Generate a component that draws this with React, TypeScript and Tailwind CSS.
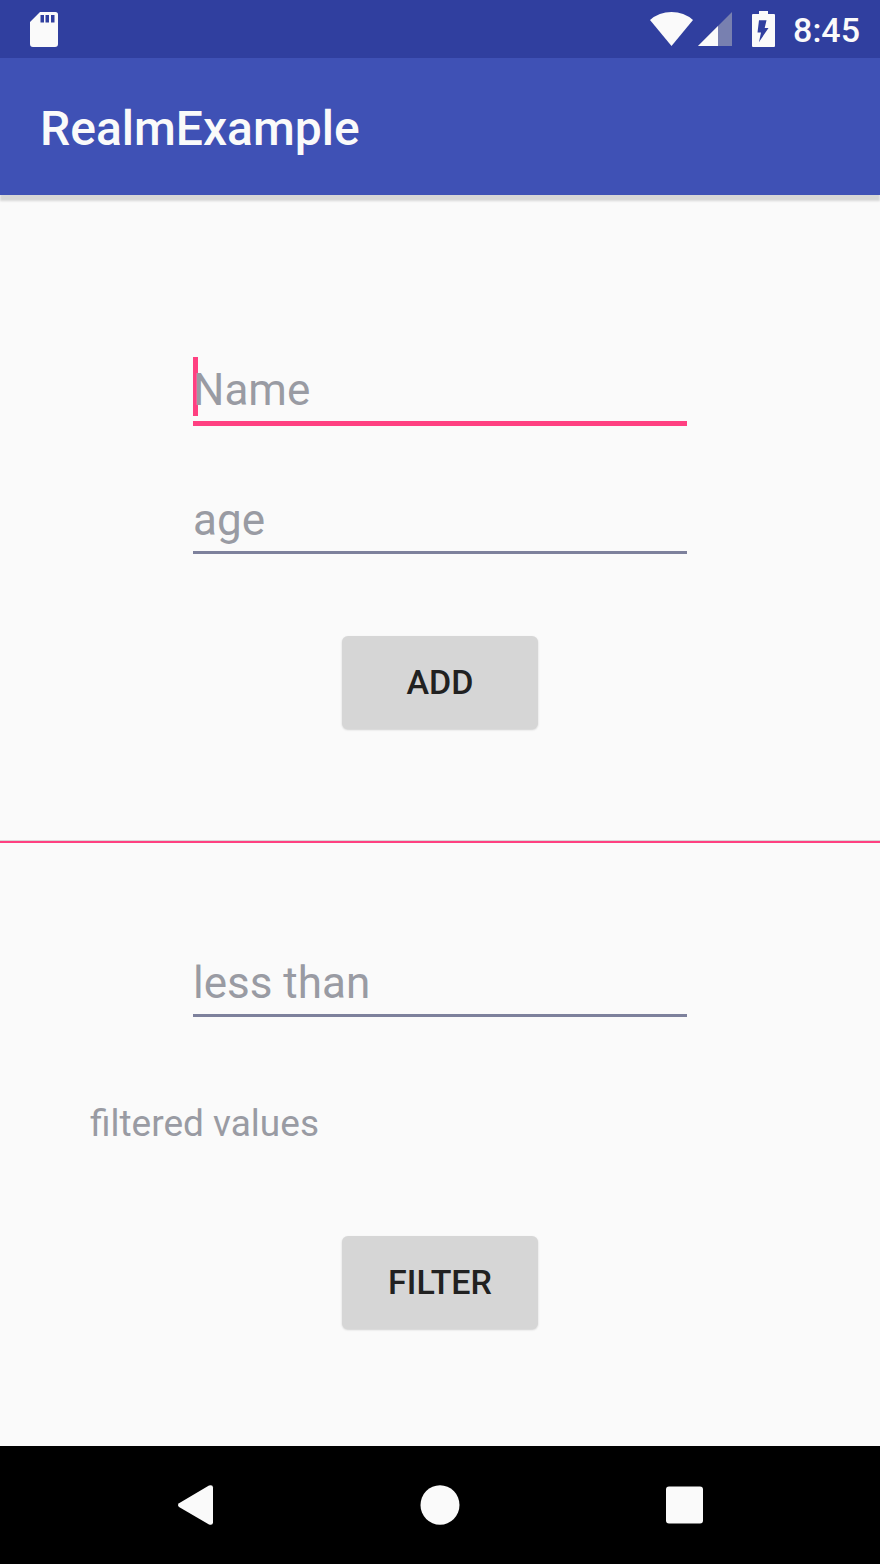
import { useState } from "react";

type FieldProps = {
  id: string;
  label: string;
  focused?: boolean;
  numeric?: boolean;
};

function Field({ id, label, focused = false, numeric = false }: FieldProps) {
  const [value, setValue] = useState("");
  return (
    <div className="relative h-[70px] w-[494px] max-w-full">
      {focused && <span className="absolute top-px left-0 h-[59px] w-[5px] bg-[#ff4081]" />}
      <input
        id={id}
        aria-label={label}
        type="text"
        inputMode={numeric ? "numeric" : "text"}
        placeholder={label}
        value={value}
        onChange={(event) => setValue(event.target.value)}
        className="relative block h-[65px] w-full bg-transparent pt-[2px] text-[44px] leading-[62px] text-[#212121] caret-[#ff4081] outline-none placeholder:text-[#999ba3]"
      />
      <div className={focused ? "h-[5px] bg-[#ff4081]" : "h-[3px] bg-[#7d819c]"} />
    </div>
  );
}

function RaisedButton({ children }: { children: string }) {
  return (
    <button
      type="button"
      className="h-[93px] w-[196px] rounded-[6px] bg-[#d6d6d6] pb-[2px] text-[34px] leading-[40px] font-medium text-[#212121] shadow-[0_1px_2px_#d0d0d0]"
    >
      {children}
    </button>
  );
}

function StatusBar() {
  return (
    <div className="flex h-[58px] items-center bg-[#303f9f] pr-5 pl-[30px] text-[#fafafa]">
      <svg viewBox="0 0 28 35" className="h-[35px] w-7" fill="currentColor" aria-hidden="true">
        <path
          fillRule="evenodd"
          d="M10 0H25.500Q28 0 28 2.500V32Q28 35 25 35H3Q0 35 0 32V10ZM10.500 3V10.500H14V3ZM15.500 3V10.500H19V3ZM21 3V10.500H24.500V3Z"
        />
      </svg>
      <div className="ml-auto flex items-center">
        <svg viewBox="0 0 44 35" className="h-[35px] w-11" fill="currentColor" aria-hidden="true">
          <path d="M21.500 34L0 8Q9 0 21.500 0T43 8Z" />
        </svg>
        <svg viewBox="0 0 34 34" className="ml-1 h-[34px] w-[34px]" aria-hidden="true">
          <path d="M0 34L34 0V34Z" fill="#7880b0" />
          <path d="M0 34L20 14V34Z" fill="#fafafa" />
        </svg>
        <svg viewBox="0 0 23 36" className="ml-5 h-9 w-[23px]" fill="currentColor" aria-hidden="true">
          <path
            fillRule="evenodd"
            d="M7 0H16V3H22Q23 3 23 4V35Q23 36 22 36H1Q0 36 0 35V4Q0 3 1 3H7ZM7 9.300L5.500 21.500H9L7 31L16.500 17H12.700L14.500 9.300Z"
          />
        </svg>
        <span className="ml-[18px] pt-[2px] text-[34px] leading-[40px] font-medium">8:45</span>
      </div>
    </div>
  );
}

function NavigationBar() {
  return (
    <nav className="flex h-[118px] items-center justify-center gap-[205px] bg-black text-[#fafafa]">
      <button type="button" aria-label="Back">
        <svg viewBox="0 0 40 40" className="h-10 w-10" fill="currentColor" aria-hidden="true">
          <path d="M4 18.200L34 .5Q38 -.5 38 2.500V37.500Q38 40.500 34 39.500L4 22Q2 20 4 18.200Z" />
        </svg>
      </button>
      <button type="button" aria-label="Home">
        <svg viewBox="0 0 40 40" className="h-10 w-10" fill="currentColor" aria-hidden="true">
          <ellipse cx="20" cy="20" rx="19.500" ry="19.800" />
        </svg>
      </button>
      <button type="button" aria-label="Overview">
        <svg viewBox="0 0 40 40" className="h-10 w-10" fill="currentColor" aria-hidden="true">
          <rect x="1" y="1.500" width="37" height="37" rx="3" />
        </svg>
      </button>
    </nav>
  );
}

export default function App() {
  return (
    <div className="flex min-h-screen flex-col bg-[#fafafa] font-[Roboto,sans-serif]">
      <StatusBar />
      <header className="flex h-[137px] items-center bg-[#3f51b5] px-10 pt-1 shadow-[0_6px_2px_#d6d6d6]">
        <h1 className="text-[48px] leading-[58px] font-medium text-[#fafafa]">RealmExample</h1>
      </header>
      <main className="flex-1">
        <section className="flex flex-col items-center pt-[161px] pb-[111px]">
          <Field id="name" label="Name" focused />
          <div className="mt-[60px] mb-20 flex w-full justify-center">
            <Field id="age" label="age" numeric />
          </div>
          <RaisedButton>ADD</RaisedButton>
        </section>
        <hr className="h-[3px] border-0 border-t border-[#d6d6d6] bg-[#ff4081]" />
        <section className="flex flex-col items-center pt-[106px] pb-[115px]">
          <Field id="less-than" label="less than" numeric />
          <p className="mt-[81px] mb-[88px] w-full px-[90px] text-[37px] leading-[48px] text-[#999ba3]">
            filtered values
          </p>
          <RaisedButton>FILTER</RaisedButton>
        </section>
      </main>
      <NavigationBar />
    </div>
  );
}
